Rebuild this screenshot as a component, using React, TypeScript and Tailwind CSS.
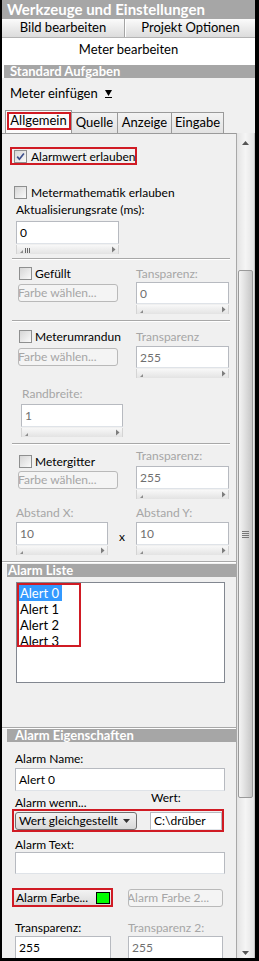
import React from 'react';

function Check({ checked }: { checked?: boolean }) {
  return (
    <span className="w-[13px] h-[13px] shrink-0 border border-[#8e8f8f] bg-gradient-to-br from-[#d6d6d6] to-[#fafafa] flex items-center justify-center">
      {checked && (
        <svg width="9" height="9" viewBox="0 0 9 9">
          <path d="M1.2 4.6 L3.4 7.2 L7.9 1.4" stroke="#3c4f8c" strokeWidth="1.7" fill="none" />
        </svg>
      )}
    </span>
  );
}

function Field({ w, h, value, dim }: { w: string; h: string; value?: string; dim?: boolean }) {
  return (
    <div
      className={`${w} ${h} shrink-0 bg-white border border-[#b7bac0] border-b-[#dfe3e8] pl-[3px] flex items-center whitespace-nowrap ${
        dim ? 'text-[#6f6f6f]' : 'text-black'
      }`}
    >
      {value}
    </div>
  );
}

function Track({ w, grip }: { w: string; grip?: boolean }) {
  return (
    <div className={`${w} h-[9px] mt-[1px] shrink-0 bg-gradient-to-b from-[#f8f8f8] to-[#e3e3e3] border-x border-[#d4d4d4] flex items-end justify-between pl-[3px] pr-[2px] pb-[1px]`}>
      <svg width="12" height="6" viewBox="0 0 12 6">
        <path d="M0 6 L3 3 L3 6 Z" fill="#8c8c8c" />
        {grip && (
          <g stroke="#6a6a6a" strokeWidth="1">
            <path d="M5.5 1 V6" />
            <path d="M7.5 1 V6" />
            <path d="M9.5 1 V6" />
          </g>
        )}
      </svg>
      <svg width="4" height="7" viewBox="0 0 4 7">
        <path d="M0 0.5 L3.5 3.5 L0 6.5 Z" fill="#7d7d7d" />
      </svg>
    </div>
  );
}

function Sep() {
  return <div className="ml-[10px] w-[218px] h-[2px] shrink-0 border-t border-[#a8a8a8] border-b border-b-white" />;
}

function DimButton({ w, label, pad }: { w: string; label: string; pad?: string }) {
  return (
    <div className={`${w} h-[18px] shrink-0 overflow-hidden rounded-[3px] border border-[#b9b9b9] bg-[#f4f4f4] text-[#a6a6a6] leading-[16px] whitespace-nowrap ${pad ?? ''}`}>
      {label}
    </div>
  );
}

function GrayBar({ children, pad }: { children: React.ReactNode; pad: string }) {
  return (
    <div className={`ml-[5px] h-[13px] shrink-0 bg-[#a6a6a6] ${pad} text-white font-bold text-[13px] leading-[13px] whitespace-nowrap`}>
      {children}
    </div>
  );
}

export default function App() {
  return (
    <div className="w-[259px] h-[961px] bg-black overflow-hidden">
      <div className="ml-[2px] w-[253px] h-[958px] flex flex-col overflow-hidden bg-[#f0f0f0] font-['Lato',sans-serif] text-[12px] text-black">
        {/* Title */}
        <div className="h-[19px] shrink-0 bg-[#a6a6a6] pl-[5px] text-white font-bold text-[15px] leading-[19px] whitespace-nowrap">
          Werkzeuge und Einstellungen
        </div>
        <div className="h-[19px] shrink-0 flex border-b border-[#b4b4b4] text-[13px]">
          <div className="w-[123px] flex items-center justify-center bg-gradient-to-b from-[#fbfbfb] to-[#dcdcdc] border-r border-[#a4a4a4]">
            Bild bearbeiten
          </div>
          <div className="flex-1 flex items-center justify-center bg-gradient-to-b from-[#fbfbfb] to-[#dcdcdc] border-l border-white">
            Projekt Optionen
          </div>
        </div>
        <div className="h-[27px] shrink-0 bg-white text-center text-[13px] leading-[22px]">Meter bearbeiten</div>
        <div className="h-[13px] shrink-0 bg-white pl-[2px]">
          <div className="h-full bg-[#a6a6a6] pl-[6px] text-white font-bold text-[13px] leading-[13px]">Standard Aufgaben</div>
        </div>

        {/* Meter einfügen */}
        <div className="h-[32px] shrink-0 pl-[8px] pt-[7px] flex items-start gap-[7px] text-[13px] leading-[16px]">
          <span>Meter einfügen</span>
          <span className="mt-[5px] flex flex-col items-center">
            <svg width="7" height="6" viewBox="0 0 7 6">
              <path d="M0 0 H7 L3.5 6 Z" fill="#000" />
            </svg>
            <span className="w-[7px] h-[1px] mt-[1px] bg-black" />
          </span>
        </div>

        {/* Tabs */}
        <div className="h-[23px] shrink-0 flex items-end pl-[3px] text-[13px]">
          <div className="relative w-[67px] h-[23px] bg-[#fcfcfc] border border-b-0 border-[#9a9a9a] flex items-center justify-center pb-[2px]">
            Allgemein
            <div className="absolute left-[1px] top-[1px] w-[64px] h-[18px] border-2 border-[#d01b24]" />
          </div>
          <div className="w-[46px] h-[21px] bg-gradient-to-b from-[#f3f3f3] to-[#e2e2e2] border border-l-0 border-b-0 border-[#9a9a9a] flex items-center justify-center">
            Quelle
          </div>
          <div className="w-[54px] h-[21px] bg-gradient-to-b from-[#f3f3f3] to-[#e2e2e2] border border-l-0 border-b-0 border-[#9a9a9a] flex items-center justify-center">
            Anzeige
          </div>
          <div className="w-[52px] h-[21px] bg-gradient-to-b from-[#f3f3f3] to-[#e2e2e2] border border-l-0 border-b-0 border-[#9a9a9a] flex items-center justify-center">
            Eingabe
          </div>
        </div>

        {/* Panel */}
        <div className="flex-1 min-h-0 flex">
          <div className="w-[234px] shrink-0 flex flex-col overflow-hidden border-t border-[#9a9a9a]">
            <div className="mt-[13px] ml-[8px] w-[127px] h-[18px] shrink-0 border-2 border-[#d01b24] flex items-center gap-[4px] pl-[2px] leading-[13px] whitespace-nowrap">
              <Check checked />
              <span>Alarmwert erlauben</span>
            </div>

            <div className="mt-[21px] ml-[12px] h-[13px] shrink-0 flex items-center gap-[4px] leading-[13px] whitespace-nowrap">
              <Check />
              <span>Metermathematik erlauben</span>
            </div>
            <div className="mt-[4px] ml-[14px] h-[14px] shrink-0 leading-[14px] whitespace-nowrap">Aktualisierungsrate (ms):</div>
            <div className="mt-[4px] ml-[14px]">
              <Field w="w-[103px]" h="h-[23px]" value="0" />
              <Track w="w-[103px]" grip />
            </div>
            <div className="mt-[4px]">
              <Sep />
            </div>

            {/* Gefüllt */}
            <div className="mt-[7px] ml-[17px] flex shrink-0 leading-[13px]">
              <div className="w-[117px]">
                <div className="h-[13px] flex items-center gap-[3px]">
                  <Check />
                  <span>Gefüllt</span>
                </div>
                <div className="mt-[4px] -ml-[1px]">
                  <DimButton w="w-[100px]" label="Farbe wählen..." pad="-indent-[1px]" />
                </div>
              </div>
              <div className="w-[93px]">
                <div className="h-[13px] text-[#a6a6a6]">Tansparenz:</div>
                <div className="mt-[2px]">
                  <Field w="w-[93px]" h="h-[22px]" value="0" dim />
                  <Track w="w-[93px]" />
                </div>
              </div>
            </div>
            <div className="mt-[6px]">
              <Sep />
            </div>

            {/* Meterumrandung */}
            <div className="mt-[8px] ml-[17px] flex shrink-0 leading-[13px]">
              <div className="w-[117px]">
                <div className="h-[13px] flex items-center gap-[3px]">
                  <Check />
                  <span>Meterumrandun</span>
                </div>
                <div className="mt-[5px] -ml-[1px]">
                  <DimButton w="w-[100px]" label="Farbe wählen..." pad="-indent-[1px]" />
                </div>
              </div>
              <div className="w-[93px]">
                <div className="h-[13px] text-[#a6a6a6]">Transparenz</div>
                <div className="mt-[3px]">
                  <Field w="w-[93px]" h="h-[22px]" value="255" dim />
                  <Track w="w-[93px]" />
                </div>
              </div>
            </div>
            <div className="mt-[9px] ml-[20px] h-[13px] shrink-0 leading-[13px] text-[#a6a6a6]">Randbreite:</div>
            <div className="mt-[4px] ml-[19px]">
              <Field w="w-[102px]" h="h-[23px]" value="1" dim />
              <Track w="w-[102px]" />
            </div>
            <div className="mt-[6px]">
              <Sep />
            </div>

            {/* Metergitter */}
            <div className="mt-[4px] ml-[17px] flex shrink-0 leading-[13px]">
              <div className="w-[117px]">
                <div className="mt-[6px] h-[13px] flex items-center gap-[3px]">
                  <Check />
                  <span>Metergitter</span>
                </div>
                <div className="mt-[3px] -ml-[1px]">
                  <DimButton w="w-[100px]" label="Farbe wählen..." pad="-indent-[1px]" />
                </div>
              </div>
              <div className="w-[93px]">
                <div className="h-[13px] text-[#a6a6a6]">Transparenz:</div>
                <div className="mt-[4px]">
                  <Field w="w-[93px]" h="h-[23px]" value="255" dim />
                  <Track w="w-[93px]" />
                </div>
              </div>
            </div>
            <div className="mt-[7px] ml-[14px] flex shrink-0 h-[13px] leading-[13px] text-[#a6a6a6]">
              <span className="w-[120px]">Abstand X:</span>
              <span>Abstand Y:</span>
            </div>
            <div className="mt-[3px] ml-[14px] flex shrink-0">
              <div>
                <Field w="w-[92px]" h="h-[23px]" value="10" dim />
                <Track w="w-[92px]" />
              </div>
              <div className="w-[28px] h-[23px] flex items-end justify-center pb-[1px] leading-[14px]">x</div>
              <div>
                <Field w="w-[93px]" h="h-[23px]" value="10" dim />
                <Track w="w-[93px]" />
              </div>
            </div>

            <div className="mt-[6px] h-[2px] shrink-0 border-t border-[#a8a8a8] border-b border-b-white" />
            <div className="mt-[1px]">
              <GrayBar pad="pl-[1px]">Alarm Liste</GrayBar>
            </div>

            {/* Alarm list */}
            <div className="relative mt-[5px] ml-[14px] w-[209px] h-[101px] shrink-0 bg-white border border-[#828790] pt-[2px] pl-[2px] text-[13px] leading-[16px]">
              <div className="w-fit bg-[#3399ff] text-white pl-[1px] pr-[3px]">Alert 0</div>
              <div className="pl-[1px]">Alert 1</div>
              <div className="pl-[1px]">Alert 2</div>
              <div className="pl-[1px]">Alert 3</div>
              <div className="absolute left-[0px] top-[0px] w-[64px] h-[64px] border-2 border-[#d01b24]" />
            </div>

            <div className="mt-[44px] h-[2px] shrink-0 border-t border-[#a8a8a8] border-b border-b-white" />
            <GrayBar pad="pl-[8px]">Alarm Eigenschaften</GrayBar>

            <div className="mt-[10px] ml-[13px] h-[13px] shrink-0 leading-[13px]">Alarm Name:</div>
            <div className="mt-[3px] ml-[13px]">
              <Field w="w-[210px]" h="h-[23px]" value="Alert 0" />
            </div>
            <div className="ml-[13px] h-[18px] shrink-0 flex leading-[13px]">
              <span className="w-[136px] self-end">Alarm wenn...</span>
              <span className="self-start">Wert:</span>
            </div>
            <div className="ml-[10px] w-[212px] h-[23px] shrink-0 border-2 border-[#d01b24] flex items-center pl-[1px]">
              <div className="w-[122px] h-[18px] shrink-0 rounded-[3px] border border-[#707070] bg-gradient-to-b from-[#f3f3f3] to-[#d8d8d8] flex items-center justify-between pl-[3px] pr-[6px] whitespace-nowrap">
                <span>Wert gleichgestellt</span>
                <svg width="7" height="4" viewBox="0 0 7 4">
                  <path d="M0 0 H7 L3.5 4 Z" fill="#333" />
                </svg>
              </div>
              <div className="ml-[13px]">
                <Field w="w-[72px]" h="h-[18px]" value="C:\drüber" />
              </div>
            </div>

            <div className="mt-[6px] ml-[13px] h-[13px] shrink-0 leading-[13px]">Alarm Text:</div>
            <div className="mt-[1px] ml-[13px]">
              <Field w="w-[210px]" h="h-[22px]" />
            </div>

            <div className="mt-[14px] ml-[10px] flex shrink-0 items-center">
              <div className="w-[101px] h-[19px] border-2 border-[#d01b24] flex items-center">
                <div className="w-[97px] h-[15px] bg-gradient-to-b from-[#f3f3f3] to-[#dadada] flex items-center justify-between pl-[2px] pr-[1px] whitespace-nowrap leading-[13px]">
                  <span>Alarm Farbe...</span>
                  <span className="w-[14px] h-[12px] border border-black bg-[#00ff00]" />
                </div>
              </div>
              <div className="ml-[15px]">
                <DimButton w="w-[95px]" label="Alarm Farbe 2..." pad="-indent-[2px]" />
              </div>
            </div>

            <div className="mt-[14px] ml-[13px] h-[13px] shrink-0 flex leading-[13px]">
              <span className="w-[113px]">Transparenz:</span>
              <span className="text-[#a6a6a6]">Transparenz 2:</span>
            </div>
            <div className="mt-[2px] ml-[13px] flex shrink-0 gap-[17px]">
              <Field w="w-[96px]" h="h-[23px]" value="255" />
              <Field w="w-[95px]" h="h-[23px]" value="255" dim />
            </div>
          </div>

          {/* Scrollbar */}
          <div className="w-[19px] shrink-0 flex flex-col border-l border-[#a8a8a8] border-r border-r-[#c4c4c4] bg-gradient-to-r from-[#e4e4e4] via-[#f5f5f5] to-[#e4e4e4]">
            <div className="h-[137px] shrink-0 flex justify-center pt-[8px]">
              <svg width="7" height="4" viewBox="0 0 7 4">
                <path d="M0 4 L3.5 0 L7 4 Z" fill="#555" />
              </svg>
            </div>
            <div className="ml-[1px] w-[15px] h-[528px] shrink-0 rounded-[2px] border border-[#9a9a9a] bg-gradient-to-r from-[#f4f4f4] via-[#dedede] to-[#c6c6c6] flex items-center justify-center">
              <div className="flex flex-col gap-[1px]">
                <span className="w-[7px] h-[1px] bg-[#777]" />
                <span className="w-[7px] h-[1px] bg-[#777]" />
                <span className="w-[7px] h-[1px] bg-[#777]" />
                <span className="w-[7px] h-[1px] bg-[#777]" />
              </div>
            </div>
            <div className="flex-1 flex items-end justify-center pb-[3px]">
              <svg width="7" height="4" viewBox="0 0 7 4">
                <path d="M0 0 H7 L3.5 4 Z" fill="#555" />
              </svg>
            </div>
          </div>
        </div>
      </div>
    </div>
  );
}
